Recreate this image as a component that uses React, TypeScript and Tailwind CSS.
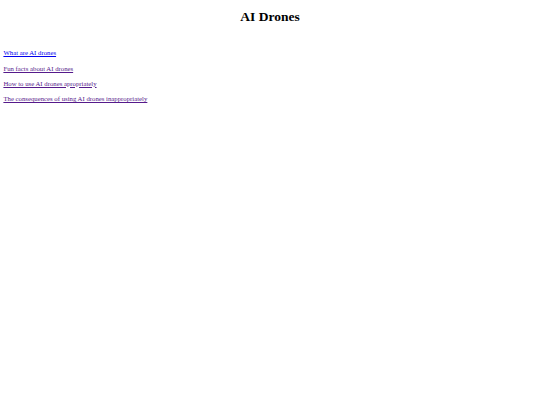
export default function App() {
  const links = [
    { label: "What are AI drones", visited: false },
    { label: "Fun facts about AI drones", visited: true },
    { label: "How to use AI drones apropriately", visited: true },
    { label: "The consequences of using AI drones inappropriately", visited: true },
  ];

  return (
    <div className="min-h-screen bg-white px-[3.4px] font-['Liberation_Serif',serif] text-black">
      <h1 className="pt-[9px] text-center text-[13.5px] leading-[15.6px] font-bold">AI Drones</h1>
      <div className="mt-[24.6px] flex flex-col gap-[7.5px]">
        {links.map((l) => (
          <div key={l.label} className="text-[6.75px] leading-[7.83px]">
            <a
              href="#"
              className={`underline ${l.visited ? "text-[#551a8b]" : "text-[#0000ee]"}`}
            >
              {l.label}
            </a>
          </div>
        ))}
      </div>
    </div>
  );
}
